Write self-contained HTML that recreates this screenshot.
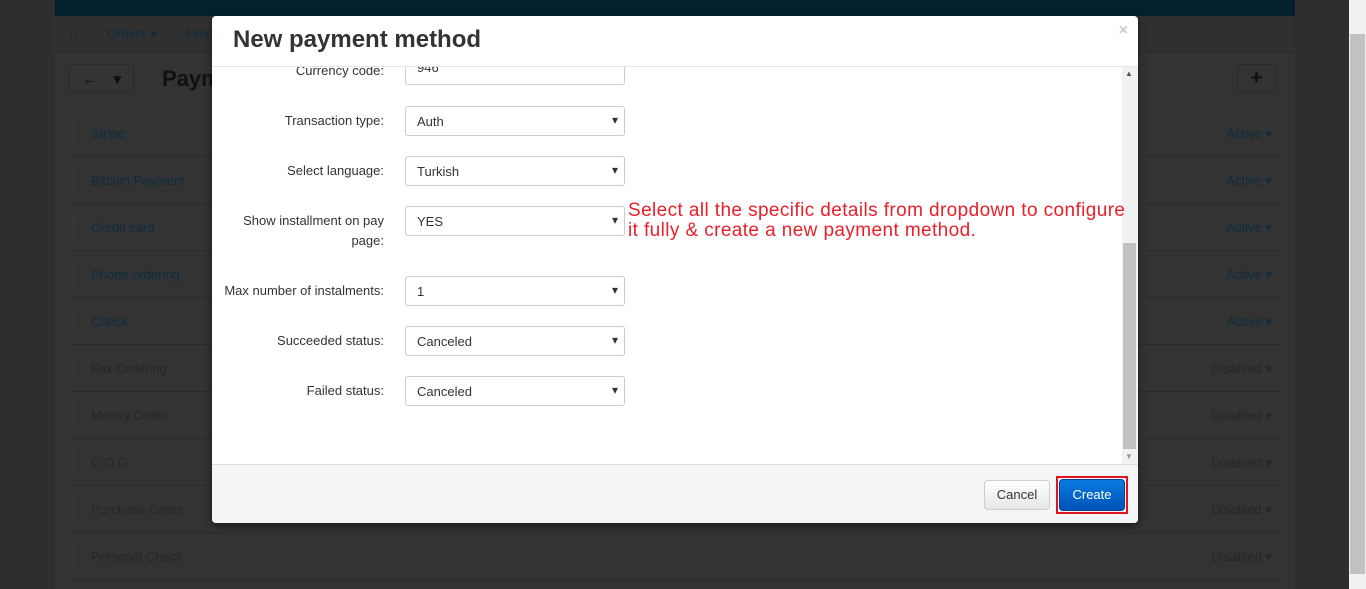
<!DOCTYPE html>
<html><head><meta charset="utf-8"><style>
*{box-sizing:border-box;margin:0;padding:0}
body{width:1366px;height:589px;overflow:hidden;background:#2e2e2e;font-family:"Liberation Sans",Arial,sans-serif;position:relative}
.page{position:absolute;left:55px;top:0;width:1240px;height:589px;background:#333}
.top{position:absolute;left:55px;top:0;width:1240px;height:16px;background:#03202c}
.nav{position:absolute;left:55px;top:16px;width:1240px;height:37px;background:#303030;border-bottom:1px solid #2a2a2a}
.nav span{position:absolute;top:10px;font-size:13px;color:#0d2c40}
.row{position:absolute;left:70px;width:1210px;height:47px;border-bottom:1px solid #2a2a2a}
.row .n{position:absolute;left:21px;top:16px;font-size:13px}
.row .s{position:absolute;right:8px;top:16px;font-size:13px}
.row .d{position:absolute;left:3px;top:12px;width:3px;height:22px;border-left:1px dotted #444}
.sb{position:absolute;left:1349px;top:0;width:17px;height:589px;background:#f1f1f1}
.modal{position:absolute;left:212px;top:16px;width:926px;height:507px;background:#fff;border-radius:4px;overflow:hidden;box-shadow:0 3px 8px rgba(0,0,0,.5)}
.mh{height:51px;border-bottom:1px solid #e5e5e5;position:relative}
.mh h2{position:absolute;left:21px;top:10px;font-size:24px;font-weight:bold;color:#333}
.mb{position:absolute;top:51px;left:0;width:926px;height:397px;background:#fff;overflow:hidden}
.lab{position:absolute;right:754px;text-align:right;font-size:13px;color:#333;line-height:20px}
.sel{position:absolute;left:193px;width:220px;height:30px;border:1px solid #ccc;border-radius:3px;font-size:13px;color:#333;padding:7px 11px}
.sel.a:after{content:"▾";position:absolute;right:6px;top:6px;font-size:12px;color:#333}
.mf{position:absolute;top:448px;left:0;width:926px;height:59px;background:#f5f5f5;border-top:1px solid #ddd}
.note{position:absolute;left:416px;top:185px;color:#e8202a;font-size:19px;line-height:20px;width:505px;letter-spacing:0.4px}
</style></head><body>
<div class="page"></div>
<div class="top"></div>
<div class="nav"><span style="left:14px;color:#222">⌂</span><span style="left:52px">Orders ▾</span><span style="left:131px">Prod</span></div>
<div style="position:absolute;left:69px;top:64px;width:65px;height:29px;border:1px solid #2a2a2a;border-radius:3px;background:#343434;color:#111;font-size:15px;font-weight:bold;padding:5px 0 0 12px">←&nbsp;&nbsp;&nbsp;&nbsp;▾</div>
<div style="position:absolute;left:162px;top:66px;font-size:22px;font-weight:bold;color:#111">Paym</div>
<div style="position:absolute;left:1237px;top:64px;width:39px;height:29px;border:1px solid #2a2a2a;border-radius:3px;color:#111;font-size:20px;text-align:center;line-height:27px;font-weight:bold">+</div>
<div class="row" style="top:110px"><div class="d"></div><span class="n" style="color:#0d2c40">Stripe</span><span class="s" style="color:#0d2c40">Active ▾</span></div>
<div class="row" style="top:157px"><div class="d"></div><span class="n" style="color:#0d2c40">Bitcoin Payment</span><span class="s" style="color:#0d2c40">Active ▾</span></div>
<div class="row" style="top:204px"><div class="d"></div><span class="n" style="color:#0d2c40">Credit card</span><span class="s" style="color:#0d2c40">Active ▾</span></div>
<div class="row" style="top:251px"><div class="d"></div><span class="n" style="color:#0d2c40">Phone ordering</span><span class="s" style="color:#0d2c40">Active ▾</span></div>
<div class="row" style="top:298px"><div class="d"></div><span class="n" style="color:#0d2c40">Check</span><span class="s" style="color:#0d2c40">Active ▾</span></div>
<div class="row" style="top:345px"><div class="d"></div><span class="n" style="color:#262626">Fax Ordering</span><span class="s" style="color:#262626">Disabled ▾</span></div>
<div class="row" style="top:392px"><div class="d"></div><span class="n" style="color:#262626">Money Order</span><span class="s" style="color:#262626">Disabled ▾</span></div>
<div class="row" style="top:439px"><div class="d"></div><span class="n" style="color:#262626">C O D</span><span class="s" style="color:#262626">Disabled ▾</span></div>
<div class="row" style="top:486px"><div class="d"></div><span class="n" style="color:#262626">Purchase Order</span><span class="s" style="color:#262626">Disabled ▾</span></div>
<div class="row" style="top:533px"><div class="d"></div><span class="n" style="color:#262626">Personal Check</span><span class="s" style="color:#262626">Disabled ▾</span></div>
<div class="sb"><div style="position:absolute;left:1px;top:34px;width:15px;height:540px;background:#c1c1c1"></div></div>
<div class="modal">
<div class="mh"><h2>New payment method</h2><span style="position:absolute;right:10px;top:6px;color:#ccc;font-size:16px;font-weight:bold">×</span></div>
<div class="mb">
<div class="lab" style="top:-6px">Currency code:</div>
<div class="sel" style="top:-12px;padding-top:4px">946</div>
<div class="lab" style="top:44px">Transaction type:</div><div class="sel a" style="top:39px">Auth</div>
<div class="lab" style="top:94px">Select language:</div><div class="sel a" style="top:89px">Turkish</div>
<div class="lab" style="top:144px">Show installment on pay<br>page:</div><div class="sel a" style="top:139px">YES</div>
<div class="lab" style="top:214px">Max number of instalments:</div><div class="sel a" style="top:209px">1</div>
<div class="lab" style="top:264px">Succeeded status:</div><div class="sel a" style="top:259px">Canceled</div>
<div class="lab" style="top:314px">Failed status:</div><div class="sel a" style="top:309px">Canceled</div>
<div style="position:absolute;left:910px;top:0;width:16px;height:397px;background:#f1f1f1"><div style="position:absolute;left:1px;top:176px;width:13px;height:206px;background:#c1c1c1"></div><span style="position:absolute;left:3px;top:2px;font-size:8px;color:#555">▲</span><span style="position:absolute;left:3px;top:385px;font-size:8px;color:#999">▼</span></div>
</div>
<div class="note">Select all the specific details from dropdown to configure it fully &amp; create a new payment method.</div>
<div class="mf">
<div style="position:absolute;left:772px;top:15px;width:66px;height:30px;border:1px solid #ccc;border-radius:4px;background:linear-gradient(#fff,#e6e6e6);font-size:13px;color:#333;text-align:center;line-height:28px">Cancel</div>
<div style="position:absolute;left:844px;top:11px;width:72px;height:38px;border:2px solid #e0141e"></div>
<div style="position:absolute;left:847px;top:14px;width:66px;height:32px;border-radius:4px;background:linear-gradient(#0a7be0,#0052b8);border:1px solid #00449a;font-size:13px;color:#fff;text-align:center;line-height:30px">Create</div>
</div>
</div>
</body></html>
